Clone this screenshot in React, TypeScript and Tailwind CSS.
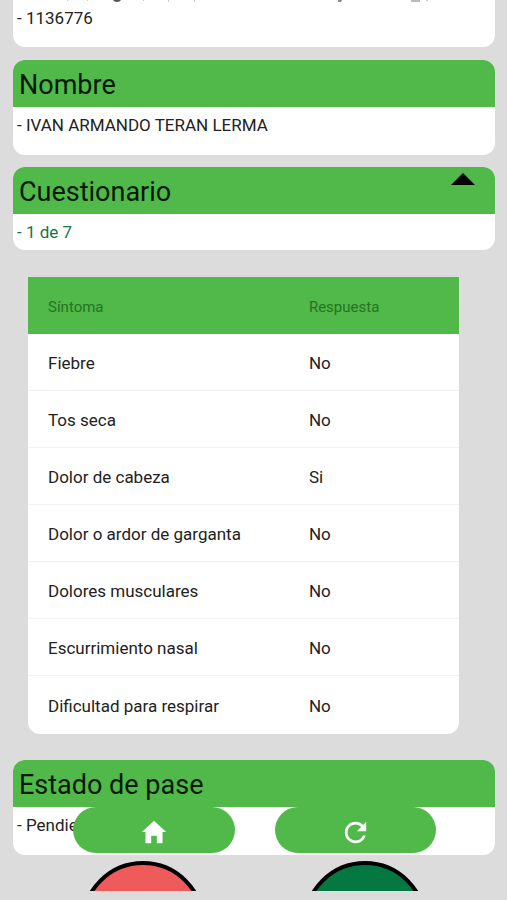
import type { ReactNode } from "react";
import { IoMdHome, IoMdRefresh } from "react-icons/io";

const answers = [
  ["Fiebre", "No"],
  ["Tos seca", "No"],
  ["Dolor de cabeza", "Si"],
  ["Dolor o ardor de garganta", "No"],
  ["Dolores musculares", "No"],
  ["Escurrimiento nasal", "No"],
  ["Dificultad para respirar", "No"],
];

function Card({ title, action, children }: { title: string; action?: ReactNode; children: ReactNode }) {
  return (
    <section className="overflow-hidden rounded-xl bg-white">
      <header className="flex h-[47px] items-start justify-between bg-[#51b84a] pr-5 pl-[6px]">
        <h2 className="text-[27px] leading-[50px] text-[#061a06]">{title}</h2>
        {action}
      </header>
      {children}
    </section>
  );
}

export default function App() {
  return (
    <div className="relative h-screen overflow-hidden bg-[#dcdcdc] font-['Roboto',sans-serif] text-[17px] text-[#222]">
      <main className="flex h-[891px] flex-col overflow-hidden pr-3 pl-[13px]">
        <section className="h-[47px] shrink-0 rounded-b-xl bg-white">
          {/* Lower edge of the line that is scrolled out of view */}
          <svg className="block h-2 w-full" aria-hidden="true">
            <path d="M100 0h8q-1 2-4 2t-4-2Z" fill="#555" />
            <path d="M325 0h4l-1 2h-3Z" fill="#888" />
            <path d="M398 0h9v2h-9Z" fill="#bbb" />
            <path d="M54 0h1v1h-1ZM74 0h1v1h-1ZM130 0h1v1h-1ZM155 0h1v2h-1ZM181 0h1v2h-1ZM413 0h2v1h-2Z" fill="#ccc" />
          </svg>
          <p className="px-1 leading-5">- 1136776</p>
        </section>

        <div className="mt-[13px] shrink-0">
          <Card title="Nombre">
            <p className="h-12 px-1 pt-2 leading-5">- IVAN ARMANDO TERAN LERMA</p>
          </Card>
        </div>

        <div className="mt-3 shrink-0">
          <Card
            title="Cuestionario"
            action={
              <button type="button" aria-label="Contraer cuestionario" className="pt-[6px]">
                <svg viewBox="0 0 24 12" className="h-3 w-6" aria-hidden="true">
                  <path d="M12 0 24 12H0Z" fill="#000" />
                </svg>
              </button>
            }
          >
            <p className="h-9 px-1 pt-2 leading-5 text-[#167547]">- 1 de 7</p>
          </Card>
        </div>

        <div className="mt-[27px] mr-9 ml-[15px] shrink-0 overflow-hidden rounded-b-xl bg-white">
          <table className="w-full table-fixed border-separate border-spacing-0 text-left">
            <thead>
              <tr className="h-[57px] bg-[#51b84a] text-[15px] text-[#267323]">
                <th scope="col" className="w-[61%] pt-[3px] pl-5 font-normal">Síntoma</th>
                <th scope="col" className="pt-[3px] pl-[18px] font-normal">Respuesta</th>
              </tr>
            </thead>
            <tbody>
              {answers.map(([symptom, answer]) => (
                <tr key={symptom} className="group h-[57px] last:h-[58px]">
                  <td className="border-b border-[#f3f3f3] pt-[3px] pl-5 group-last:border-b-0">{symptom}</td>
                  <td className="border-b border-[#f3f3f3] pt-[3px] pl-[18px] group-last:border-b-0">{answer}</td>
                </tr>
              ))}
            </tbody>
          </table>
        </div>

        <div className="mt-[26px] shrink-0">
          <Card title="Estado de pase">
            <p className="h-12 px-1 pt-2 leading-5">- Pendiente</p>
          </Card>
        </div>

        <div className="mt-[6px] flex shrink-0 justify-center gap-[98px]">
          <button type="button" aria-label="Rechazar" className="size-[124px] rounded-full border-4 border-black bg-[#ef5a5a]" />
          <button type="button" aria-label="Aceptar" className="size-[124px] rounded-full border-4 border-black bg-[#047840]" />
        </div>
      </main>

      <nav className="absolute inset-x-0 bottom-[47px] flex h-[46px] gap-10 pr-[71px] pl-[73px]">
        <button type="button" aria-label="Inicio" className="flex flex-1 items-center justify-center rounded-full bg-[#51b84a] pt-1 text-white">
          <IoMdHome size={30} />
        </button>
        <button type="button" aria-label="Actualizar" className="flex flex-1 items-center justify-center rounded-full bg-[#51b84a] pt-1 text-white">
          <IoMdRefresh size={31} />
        </button>
      </nav>
    </div>
  );
}
